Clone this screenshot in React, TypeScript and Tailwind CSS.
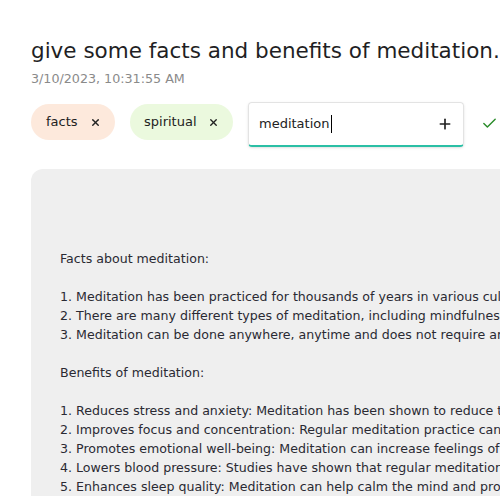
import { Check, Plus, X } from "lucide-react";

const answer = [
  "",
  "",
  "",
  "Facts about meditation:",
  "",
  "1. Meditation has been practiced for thousands of years in various cultures and religions.",
  "2. There are many different types of meditation, including mindfulness, transcendental and loving-kindness meditation.",
  "3. Meditation can be done anywhere, anytime and does not require any special equipment.",
  "",
  "Benefits of meditation:",
  "",
  "1. Reduces stress and anxiety: Meditation has been shown to reduce the levels of stress hormones in the body.",
  "2. Improves focus and concentration: Regular meditation practice can improve attention span and memory.",
  "3. Promotes emotional well-being: Meditation can increase feelings of happiness and self-awareness.",
  "4. Lowers blood pressure: Studies have shown that regular meditation can lower blood pressure.",
  "5. Enhances sleep quality: Meditation can help calm the mind and promote better sleep.",
].join("\n");

export default function App() {
  return (
    <div className="h-[500px] w-[500px] overflow-hidden bg-white font-['DejaVu_Sans',sans-serif] text-[#222]">
      <div className="pl-[31px] pt-[36px]">
        <h1 className="whitespace-nowrap text-[21.5px] leading-[30px] text-[#1f1f24]">
          give some facts and benefits of meditation.
        </h1>
        <p className="mt-[4px] text-[12.7px] leading-[18px] text-[#8a8a8a]">
          3/10/2023, 10:31:55 AM
        </p>
        <div className="mt-[14px] flex items-start">
          <span className="mt-[2px] flex h-[36px] w-[84px] items-center rounded-full bg-[#fde9dc] pl-[15px] text-[13px]">
            facts
            <X size={11} strokeWidth={3} className="ml-auto mr-[14px]" />
          </span>
          <span className="ml-[15px] mt-[2px] flex h-[36px] w-[103px] items-center rounded-full bg-[#ebf9de] pl-[14px] text-[13px]">
            spiritual
            <X size={11} strokeWidth={3} className="ml-auto mr-[14px]" />
          </span>
          <div className="ml-[15px] flex h-[45px] w-[216px] items-center rounded-[4px] border border-[#e3e3e3] border-b-2 border-b-[#2bbfa5] pl-[10px] pr-[10px] text-[13px] shadow-sm">
            <span>meditation</span>
            <span className="ml-[1px] h-[18px] w-[1px] bg-black" />
            <Plus size={16} strokeWidth={2.5} className="ml-auto" />
          </div>
          <Check size={17} strokeWidth={2} className="ml-[17px] mt-[13px] text-[#2a8c2a]" />
        </div>
      </div>
      <div className="ml-[31px] mt-[22px] w-[900px] rounded-tl-[12px] bg-[#efefef] pl-[29px] pt-[23px]">
        <pre className="whitespace-pre font-['DejaVu_Sans',sans-serif] text-[12.6px] leading-[19px] text-[#2a2a33]">
          {answer}
        </pre>
      </div>
    </div>
  );
}
